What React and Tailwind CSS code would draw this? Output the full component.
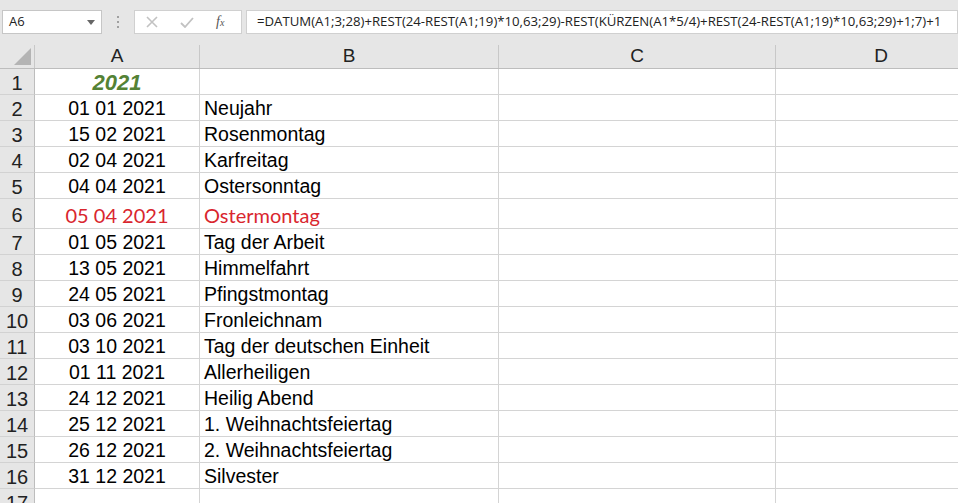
import React from 'react';

const formula =
  '=DATUM(A1;3;28)+REST(24-REST(A1;19)*10,63;29)-REST(KÜRZEN(A1*5/4)+REST(24-REST(A1;19)*10,63;29)+1;7)+1';

const rows = [
  ['01 01 2021', 'Neujahr'],
  ['15 02 2021', 'Rosenmontag'],
  ['02 04 2021', 'Karfreitag'],
  ['04 04 2021', 'Ostersonntag'],
  ['05 04 2021', 'Ostermontag', true],
  ['01 05 2021', 'Tag der Arbeit'],
  ['13 05 2021', 'Himmelfahrt'],
  ['24 05 2021', 'Pfingstmontag'],
  ['03 06 2021', 'Fronleichnam'],
  ['03 10 2021', 'Tag der deutschen Einheit'],
  ['01 11 2021', 'Allerheiligen'],
  ['24 12 2021', 'Heilig Abend'],
  ['25 12 2021', '1. Weihnachtsfeiertag'],
  ['26 12 2021', '2. Weihnachtsfeiertag'],
  ['31 12 2021', 'Silvester'],
];

// Zeilenkopf links
const RowHead = ({ n, tall }) => (
  <div
    className={`w-[35px] shrink-0 bg-[#e6e6e6] border-r border-[#bdbdbd] border-b border-b-[#d2d2d2] flex items-center justify-center pt-[2px] text-[20px] text-[#222] ${
      tall ? 'h-[30px]' : 'h-[26px]'
    }`}
  >
    {n}
  </div>
);

const Cell = ({ w, tall, className = '', children }) => (
  <div
    className={`${w} shrink-0 border-r border-b border-[#d4d4d4] flex items-center pt-[2px] overflow-hidden whitespace-nowrap ${
      tall ? 'h-[30px]' : 'h-[26px]'
    } ${className}`}
  >
    {children}
  </div>
);

const Toolbar = () => (
  <div className="h-[45px] bg-[#e6e6e6] flex items-start pt-[10px] font-['Open_Sans',sans-serif]">
    {/* Namenfeld */}
    <div className="ml-[2px] w-[100px] h-[24px] bg-white border border-[#c6c6c6] flex items-center justify-between pl-[6px] pr-[6px]">
      <span className="text-[13px] text-[#222]">A6</span>
      <svg width="8" height="5" viewBox="0 0 8 5">
        <path d="M0 0 L8 0 L4 5 Z" fill="#666" />
      </svg>
    </div>
    <div className="w-[32px] h-[24px] flex flex-col items-center justify-center gap-[3px]">
      <span className="w-[2px] h-[2px] bg-[#a0a0a0]" />
      <span className="w-[2px] h-[2px] bg-[#a0a0a0]" />
      <span className="w-[2px] h-[2px] bg-[#a0a0a0]" />
    </div>
    {/* Abbrechen / Eingeben / Funktion */}
    <div className="w-[108px] h-[24px] bg-white border border-[#d0d0d0] flex items-center">
      <svg className="ml-[11px]" width="12" height="12" viewBox="0 0 12 12">
        <path d="M1 1 L11 11 M11 1 L1 11" stroke="#c2c2c2" strokeWidth="1.6" />
      </svg>
      <svg className="ml-[22px]" width="14" height="11" viewBox="0 0 14 11">
        <path d="M1 6 L5 10 L13 1" stroke="#c2c2c2" strokeWidth="1.8" fill="none" />
      </svg>
      <span className="ml-[22px] text-[14px] italic text-[#555] font-['Liberation_Serif',serif] leading-none">
        f<span className="text-[10px]">x</span>
      </span>
    </div>
    {/* Bearbeitungsleiste */}
    <div className="ml-[4px] flex-1 h-[24px] bg-white border border-[#d0d0d0] flex items-center pl-[10px] overflow-hidden whitespace-nowrap">
      <span className="text-[13.2px] text-[#222]">{formula}</span>
    </div>
  </div>
);

export default function App() {
  return (
    <div className="w-[958px] h-[503px] overflow-hidden bg-white font-['Liberation_Sans',Arial,sans-serif]">
      <Toolbar />

      {/* Spaltenköpfe */}
      <div className="flex h-[24px] bg-[#e6e6e6] border-b border-[#bdbdbd] text-[19px] text-[#222]">
        <div className="w-[35px] shrink-0 border-r border-[#c8c8c8] relative">
          <svg className="absolute right-[3px] bottom-[3px]" width="17" height="17" viewBox="0 0 17 17">
            <path d="M17 0 L17 17 L0 17 Z" fill="#b4b4b4" />
          </svg>
        </div>
        <div className="w-[165px] shrink-0 border-r border-[#c8c8c8] flex items-center justify-center">A</div>
        <div className="w-[299px] shrink-0 border-r border-[#c8c8c8] flex items-center justify-center">B</div>
        <div className="w-[277px] shrink-0 border-r border-[#c8c8c8] flex items-center justify-center">C</div>
        <div className="w-[210px] shrink-0 flex items-center justify-center">D</div>
      </div>

      {/* Zeile 1 */}
      <div className="flex">
        <RowHead n={1} />
        <Cell w="w-[165px]" className="justify-center">
          <span className="text-[22px] font-bold italic text-[#548235]">2021</span>
        </Cell>
        <Cell w="w-[299px]" />
        <Cell w="w-[277px]" />
        <Cell w="w-[210px]" className="border-r-0" />
      </div>

      {rows.map(([date, name, red], i) => (
        <div key={i} className="flex">
          <RowHead n={i + 2} tall={red} />
          <Cell
            w="w-[165px]"
            tall={red}
            className={`justify-center ${
              red ? "text-[20px] text-[#d9262e] font-['Lato',sans-serif]" : 'text-[19.5px] text-black'
            }`}
          >
            {date}
          </Cell>
          <Cell
            w="w-[299px]"
            tall={red}
            className={`pl-[4px] ${
              red ? "text-[20px] text-[#d9262e] font-['Lato',sans-serif]" : 'text-[19.5px] text-black'
            }`}
          >
            {name}
          </Cell>
          <Cell w="w-[277px]" tall={red} />
          <Cell w="w-[210px]" tall={red} className="border-r-0" />
        </div>
      ))}

      {/* Zeile 17 */}
      <div className="flex">
        <RowHead n={17} />
        <Cell w="w-[165px]" />
        <Cell w="w-[299px]" />
        <Cell w="w-[277px]" />
        <Cell w="w-[210px]" className="border-r-0" />
      </div>
    </div>
  );
}
